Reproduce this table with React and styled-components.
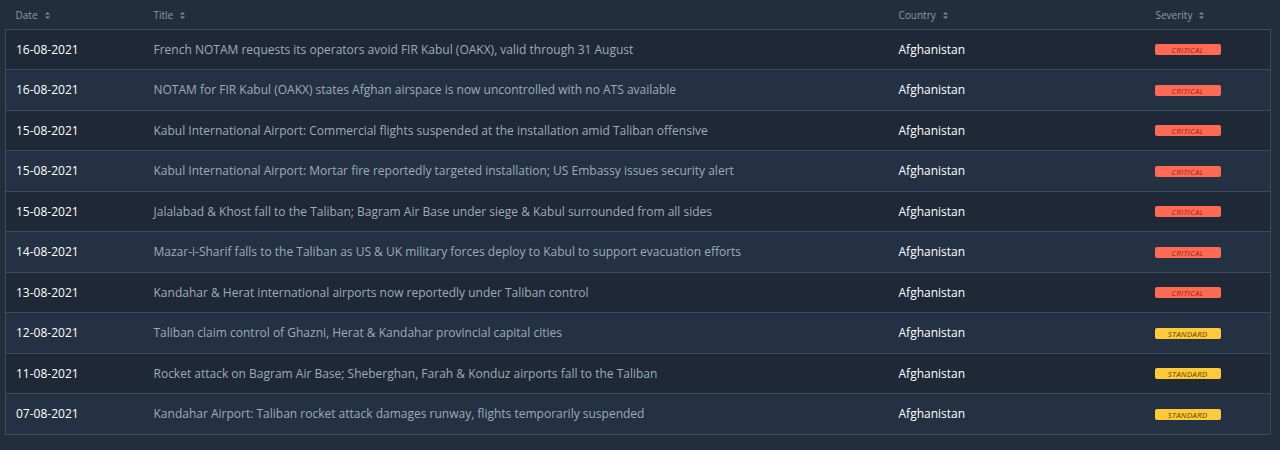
import React from 'react';
import styled, { createGlobalStyle } from 'styled-components';

const GlobalStyle = createGlobalStyle`
  html, body {
    margin: 0;
    padding: 0;
    background: #222e3c;
    font-family: 'Open Sans', 'Liberation Sans', sans-serif;
  }
`;

const Page = styled.div`
  width: 1280px;
  height: 450px;
  padding: 0 9px 0 5px;
  box-sizing: border-box;
  background: #222e3c;
`;

const Table = styled.table`
  width: 100%;
  border-collapse: collapse;
  table-layout: fixed;
`;

const HeadCell = styled.th`
  box-sizing: border-box;
  width: ${props => props.$w || 'auto'};
  height: 29px;
  padding: 2px 10px 0;
  text-align: left;
  font-size: 10px;
  font-weight: 400;
  color: #8c9bad;
  white-space: nowrap;
`;

const SortIcon = () => (
  <svg width="5" height="7" viewBox="0 0 5 7" style={{ marginLeft: 7, verticalAlign: 0 }}>
    <path d="M2.5 0 L5 2.6 L0 2.6 Z M2.5 7 L5 4.4 L0 4.4 Z" fill="#7d8ca0" />
  </svg>
);

const Row = styled.tr`
  height: 40.5px;
  background: ${props => (props.$odd ? '#1e2836' : '#243143')};
  border: 1px solid #3b4b5f;
`;

const Cell = styled.td`
  padding: 0 10px;
  font-size: 12px;
  color: ${props => props.$color || '#ffffff'};
  white-space: nowrap;
  overflow: hidden;
`;

const Badge = styled.span`
  display: inline-block;
  width: 66px;
  height: 11px;
  line-height: 11px;
  margin: 0 0 2px -1px;
  border-radius: 2px;
  text-align: center;
  font-size: 8px;
  font-style: italic;
  letter-spacing: 0.2px;
  vertical-align: middle;
  background: ${props => (props.$level === 'CRITICAL' ? '#ff6a55' : '#ffc93c')};
  color: ${props => (props.$level === 'CRITICAL' ? '#9a2418' : '#5e4600')};
`;

const rows = [
  ['16-08-2021', 'French NOTAM requests its operators avoid FIR Kabul (OAKX), valid through 31 August', 'CRITICAL'],
  ['16-08-2021', 'NOTAM for FIR Kabul (OAKX) states Afghan airspace is now uncontrolled with no ATS available', 'CRITICAL'],
  ['15-08-2021', 'Kabul International Airport: Commercial flights suspended at the installation amid Taliban offensive', 'CRITICAL'],
  ['15-08-2021', 'Kabul International Airport: Mortar fire reportedly targeted installation; US Embassy issues security alert', 'CRITICAL'],
  ['15-08-2021', 'Jalalabad & Khost fall to the Taliban; Bagram Air Base under siege & Kabul surrounded from all sides', 'CRITICAL'],
  ['14-08-2021', 'Mazar-i-Sharif falls to the Taliban as US & UK military forces deploy to Kabul to support evacuation efforts', 'CRITICAL'],
  ['13-08-2021', 'Kandahar & Herat international airports now reportedly under Taliban control', 'CRITICAL'],
  ['12-08-2021', 'Taliban claim control of Ghazni, Herat & Kandahar provincial capital cities', 'STANDARD'],
  ['11-08-2021', 'Rocket attack on Bagram Air Base; Sheberghan, Farah & Konduz airports fall to the Taliban', 'STANDARD'],
  ['07-08-2021', 'Kandahar Airport: Taliban rocket attack damages runway, flights temporarily suspended', 'STANDARD'],
];

export default function App() {
  return (
    <Page>
      <GlobalStyle />
      <Table>
        <thead>
          <tr>
            <HeadCell $w="138px">Date<SortIcon /></HeadCell>
            <HeadCell $w="745px">Title<SortIcon /></HeadCell>
            <HeadCell $w="257px">Country<SortIcon /></HeadCell>
            <HeadCell>Severity<SortIcon /></HeadCell>
          </tr>
        </thead>
        <tbody>
          {rows.map(([date, title, level], i) => (
            <Row key={i} $odd={i % 2 === 0}>
              <Cell>{date}</Cell>
              <Cell $color="#9eabbb">{title}</Cell>
              <Cell>Afghanistan</Cell>
              <Cell><Badge $level={level}>{level}</Badge></Cell>
            </Row>
          ))}
        </tbody>
      </Table>
    </Page>
  );
}
